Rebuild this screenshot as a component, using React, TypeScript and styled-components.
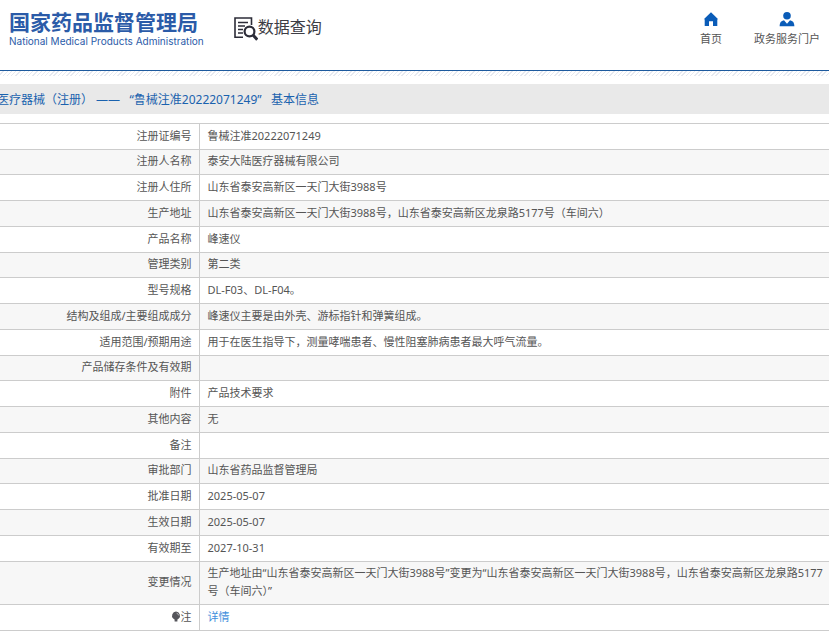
import React from "react";
import styled, { createGlobalStyle } from "styled-components";

const Global = createGlobalStyle`
  * { box-sizing: border-box; }
  body {
    margin: 0;
    background: #fff;
    color: #555;
    font: 11px/18px "Noto Sans", "Noto Sans CJK SC", sans-serif;
    overflow-x: hidden;
  }
`;

const Header = styled.header`
  display: flex;
  align-items: flex-start;
  height: 71px;
  padding: 8px 9px 0 9px;
  border-bottom: 1px solid #1d5a9e;
`;

const Brand = styled.a`
  display: flex;
  flex-direction: column;
  color: #2b5ba8;
  text-decoration: none;
  white-space: nowrap;
`;

const BrandName = styled.span`
  font: 700 21px/26px "Noto Sans CJK SC", sans-serif;
`;

const BrandEnglish = styled.span`
  font: 400 10px/15px "Inter", "Liberation Sans", sans-serif;
`;

const Section = styled.div`
  display: flex;
  align-items: flex-start;
  margin: 5px auto 0 30px;
  color: #3d3d45;
  font: 16px/26px "Noto Sans CJK SC", sans-serif;
  white-space: nowrap;
`;

const SectionIcon = styled.svg`
  margin-top: 4px;
`;

const Nav = styled.nav`
  display: flex;
  gap: 32px;
  padding-top: 3px;
`;

const NavLink = styled.a`
  display: flex;
  flex-direction: column;
  align-items: center;
  gap: 3px;
  color: #555;
  text-decoration: none;
  white-space: nowrap;
`;

const Hatch = styled.div`
  height: 5px;
  margin-bottom: 8px;
  background: repeating-linear-gradient(135deg, #fff 0 2px, #e6e9f0 2px 3px);
`;

const Title = styled.h1`
  margin: 0 0 9px -3px;
  padding: 7px 0 5px;
  background: #e9e9e9;
  color: #1a62ae;
  font-size: 12px;
  font-weight: 400;
  line-height: 18px;
  white-space: pre;
`;

const Table = styled.table`
  width: 100%;
  border-collapse: collapse;
  border-bottom: 1px solid #ccc;
`;

const Row = styled.tr`
  height: 26px;
  border-top: 1px solid #ccc;
  &:nth-child(even) { background: #f7f7f7; }
  &:nth-child(4n + 2) { height: 25px; }
  &:nth-child(18) { height: 43px; }
`;

const Label = styled.th`
  width: 199px;
  padding: 0 7px 2px;
  border-right: 1px solid #ccc;
  font-weight: 400;
  text-align: right;
`;

const Value = styled.td`
  padding: 0 0 2px 8px;
`;

const DetailLink = styled.a`
  color: #3f8fdc;
  text-decoration: none;
`;

const NoteIcon = styled.svg`
  vertical-align: -1px;
`;

const records: [string, string][] = [
  ["注册证编号", "鲁械注准20222071249"],
  ["注册人名称", "泰安大陆医疗器械有限公司"],
  ["注册人住所", "山东省泰安高新区一天门大街3988号"],
  ["生产地址", "山东省泰安高新区一天门大街3988号，山东省泰安高新区龙泉路5177号（车间六）"],
  ["产品名称", "峰速仪"],
  ["管理类别", "第二类"],
  ["型号规格", "DL-F03、DL-F04。"],
  ["结构及组成/主要组成成分", "峰速仪主要是由外壳、游标指针和弹簧组成。"],
  ["适用范围/预期用途", "用于在医生指导下，测量哮喘患者、慢性阻塞肺病患者最大呼气流量。"],
  ["产品储存条件及有效期", ""],
  ["附件", "产品技术要求"],
  ["其他内容", "无"],
  ["备注", ""],
  ["审批部门", "山东省药品监督管理局"],
  ["批准日期", "2025-05-07"],
  ["生效日期", "2025-05-07"],
  ["有效期至", "2027-10-31"],
  ["变更情况", "生产地址由“山东省泰安高新区一天门大街3988号”变更为“山东省泰安高新区一天门大街3988号，山东省泰安高新区龙泉路5177号（车间六）”"],
];

export default function App() {
  return (
    <>
      <Global />
      <Header>
        <Brand href="#">
          <BrandName>国家药品监督管理局</BrandName>
          <BrandEnglish>National Medical Products Administration</BrandEnglish>
        </Brand>
        <Section>
          <SectionIcon width="24" height="24" viewBox="0 0 24 24" fill="none" stroke="#2c2c38" aria-hidden="true">
            <path d="M9 20.2H1V1H17.5V8" strokeWidth="1.6" />
            <path d="M4 5.5H14M4 9H11M4 12.5H9M4 16H9" strokeWidth="1.5" />
            <circle cx="15.5" cy="14.5" r="4.9" strokeWidth="2.2" />
            <path d="M19 18L23.3 22.7" strokeWidth="3" />
          </SectionIcon>
          <span>数据查询</span>
        </Section>
        <Nav>
          <NavLink href="#">
            <svg width="16" height="16" viewBox="0 0 16 16" fill="#0a5cb8" aria-hidden="true">
              <path d="M8 1.2L15.2 8.3H14.3V15H10V10.2H6V15H1.7V8.3H0.8Z" />
            </svg>
            首页
          </NavLink>
          <NavLink href="#">
            <svg width="16" height="16" viewBox="0 0 16 16" fill="#0a5cb8" aria-hidden="true">
              <circle cx="8" cy="4.8" r="3.8" />
              <path d="M0.6 15.2C0.6 11.6 2 9.8 5 9.2L8 12.8L11 9.2C14 9.8 15.4 11.6 15.4 15.2Z" />
            </svg>
            政务服务门户
          </NavLink>
        </Nav>
      </Header>
      <Hatch />
      <main>
        <Title>{"医疗器械（注册） ——   “鲁械注准20222071249”   基本信息"}</Title>
        <Table>
          <tbody>
            {records.map(([label, value]) => (
              <Row key={label}>
                <Label scope="row">{label}</Label>
                <Value>{value}</Value>
              </Row>
            ))}
            <Row>
              <Label scope="row">
                <NoteIcon width="10" height="11" viewBox="0 0 10 11" aria-hidden="true">
                  <path d="M5 0.5A4.2 4.2 0 0 1 7.8 7.6L6.4 8.6V10.5H3.6V8.6L2.2 7.6A4.2 4.2 0 0 1 5 0.5Z" fill="#55555b" />
                  <path d="M5.6 2.2Q7.4 2.6 7.6 4.4" fill="none" stroke="#bbb" strokeWidth="0.9" />
                </NoteIcon>
                注
              </Label>
              <Value><DetailLink href="#">详情</DetailLink></Value>
            </Row>
          </tbody>
        </Table>
      </main>
    </>
  );
}
